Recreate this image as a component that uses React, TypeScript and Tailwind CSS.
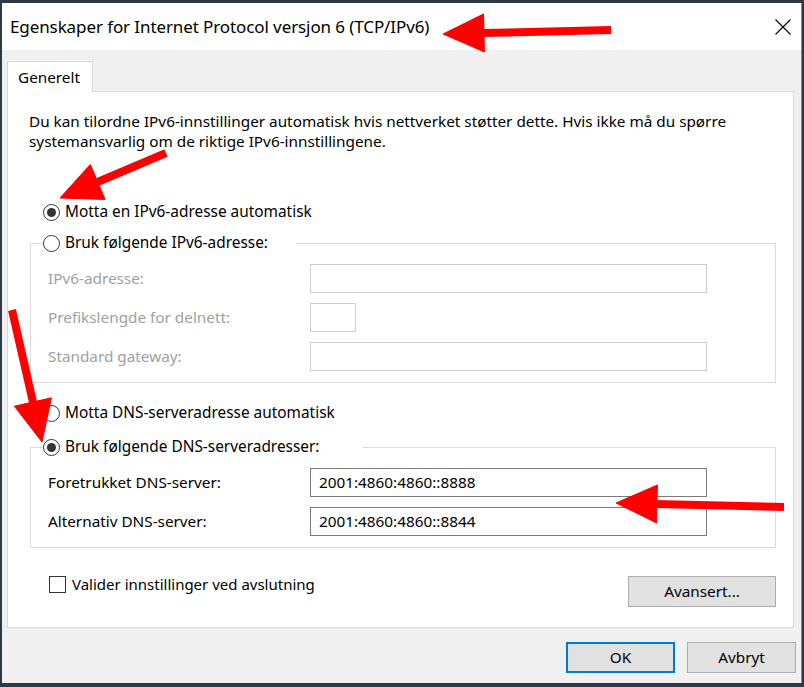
import React from "react";

const font = { fontFamily: '"Noto Sans", "Open Sans", sans-serif' };

function Radio({ checked }: { checked?: boolean }) {
  return (
    <span className="flex h-[17px] w-[17px] shrink-0 items-center justify-center rounded-full border border-[#333333] bg-white">
      {checked && <span className="h-[9px] w-[9px] rounded-full bg-[#333333]" />}
    </span>
  );
}

function RadioRow({ label, checked }: { label: string; checked?: boolean }) {
  return (
    <div className="flex h-[20px] items-center gap-[5px] text-[15.4px] text-black">
      <Radio checked={checked} />
      <span>{label}</span>
    </div>
  );
}

function Field({
  label,
  value,
  disabled,
  small,
}: {
  label: string;
  value?: string;
  disabled?: boolean;
  small?: boolean;
}) {
  return (
    <div className="flex h-[29px] items-center">
      <span className={`w-[262px] shrink-0 text-[15.3px] ${disabled ? "text-[#a0a0a0]" : "text-black"}`}>
        {label}
      </span>
      <div
        className={`flex h-[29px] items-center border bg-white px-[8px] text-[15.3px] text-black ${
          disabled ? "border-[#cccccc]" : "border-[#7a7a7a]"
        } ${small ? "w-[46px]" : "w-[397px]"}`}
      >
        {value}
      </div>
    </div>
  );
}

function GroupBox({
  legend,
  legendWidth,
  checked,
  children,
}: {
  legend: string;
  legendWidth: string;
  checked?: boolean;
  children: React.ReactNode;
}) {
  return (
    <div className="w-[746px] border border-[#dcdcdc] px-[17px] pb-[11px]">
      <div className={`-mt-[11px] -ml-[5px] bg-white ${legendWidth}`}>
        <RadioRow label={legend} checked={checked} />
      </div>
      <div className="flex flex-col gap-[10px] pt-[11px]">{children}</div>
    </div>
  );
}

function Arrows() {
  const arrows = [
    { from: [611, 30], tip: [443, 34] },
    { from: [166, 153], tip: [60, 198] },
    { from: [12, 310], tip: [42, 442] },
    { from: [784, 507], tip: [616, 503] },
  ];
  return (
    <svg className="pointer-events-none absolute left-0 top-0" width="804" height="687">
      {arrows.map((a, i) => {
        const [fx, fy] = a.from;
        const [tx, ty] = a.tip;
        const len = Math.hypot(tx - fx, ty - fy);
        const dx = (tx - fx) / len;
        const dy = (ty - fy) / len;
        const bx = tx - dx * 41;
        const by = ty - dy * 41;
        const px = -dy * 19;
        const py = dx * 19;
        return (
          <g key={i} fill="#ff0000" stroke="#ff0000">
            <line x1={fx} y1={fy} x2={bx + dx * 2} y2={by + dy * 2} strokeWidth="8" />
            <polygon points={`${tx},${ty} ${bx + px},${by + py} ${bx - px},${by - py}`} strokeWidth="1" />
          </g>
        );
      })}
    </svg>
  );
}

export default function App() {
  return (
    <div className="relative h-[687px] w-[804px] overflow-hidden bg-[#2d3a46]" style={font}>
      <div className="ml-[2px] mt-[3px] flex h-[680px] w-[800px] flex-col border-r border-[#8a8a8a]">
        <div className="flex h-[47px] shrink-0 items-center justify-between bg-white pl-[8px] pr-[10px]">
          <span className="text-[17px] tracking-[-0.1px] text-black">
            Egenskaper for Internet Protocol versjon 6 (TCP/IPv6)
          </span>
          <svg width="16" height="16" viewBox="0 0 16 16">
            <path d="M0.5 0.5 L15.5 15.5 M15.5 0.5 L0.5 15.5" stroke="#000" strokeWidth="1.1" />
          </svg>
        </div>

        <div className="flex flex-1 flex-col bg-[#f0f0f0] px-[5px] pt-[11px]">
          <div className="flex">
            <div className="relative z-10 -mb-px flex h-[31px] w-[86px] items-center border border-b-0 border-[#d9d9d9] bg-white pl-[10px] text-[15.3px] text-black">
              Generelt
            </div>
          </div>
          <div className="flex h-[537px] w-[787px] flex-col border border-[#d9d9d9] bg-white pl-[21px] pr-[17px] pt-[19px]">
            <p className="text-[15.3px] leading-[20px] text-black">
              Du kan tilordne IPv6-innstillinger automatisk hvis nettverket støtter dette. Hvis ikke må du spørre
              <br />
              systemansvarlig om de riktige IPv6-innstillingene.
            </p>

            <div className="ml-[14px] mt-[51px]">
              <RadioRow label="Motta en IPv6-adresse automatisk" checked />
            </div>

            <div className="ml-px mt-[21px]">
              <GroupBox legend="Bruk følgende IPv6-adresse:" legendWidth="w-[253px]">
                <Field label="IPv6-adresse:" disabled />
                <Field label="Prefikslengde for delnett:" disabled small />
                <Field label="Standard gateway:" disabled />
              </GroupBox>
            </div>

            <div className="ml-[14px] mt-[20px]">
              <RadioRow label="Motta DNS-serveradresse automatisk" />
            </div>

            <div className="ml-px mt-[24px]">
              <GroupBox legend="Bruk følgende DNS-serveradresser:" legendWidth="w-[320px]" checked>
                <Field label="Foretrukket DNS-server:" value="2001:4860:4860::8888" />
                <Field label="Alternativ DNS-server:" value="2001:4860:4860::8844" />
              </GroupBox>
            </div>

            <div className="ml-px mt-[28px] flex w-[746px] items-start justify-between">
              <div className="ml-[19px] flex items-center gap-[6px] text-[15px] text-black">
                <span className="h-[17px] w-[17px] border border-[#333333] bg-white" />
                <span className="leading-[17px]">Valider innstillinger ved avslutning</span>
              </div>
              <button className="flex h-[31px] w-[148px] items-center justify-center border border-[#adadad] bg-[#e1e1e1] text-[15.3px] text-black">
                Avansert...
              </button>
            </div>
          </div>

          <div className="mt-[14px] flex justify-end gap-[12px]">
            <button className="flex h-[31px] w-[109px] items-center justify-center border-2 border-[#0078d7] bg-[#e1e1e1] text-[15.3px] text-black">
              OK
            </button>
            <button className="flex h-[31px] w-[109px] items-center justify-center border border-[#adadad] bg-[#e1e1e1] text-[15.3px] text-black">
              Avbryt
            </button>
          </div>
        </div>
      </div>
      <Arrows />
    </div>
  );
}
